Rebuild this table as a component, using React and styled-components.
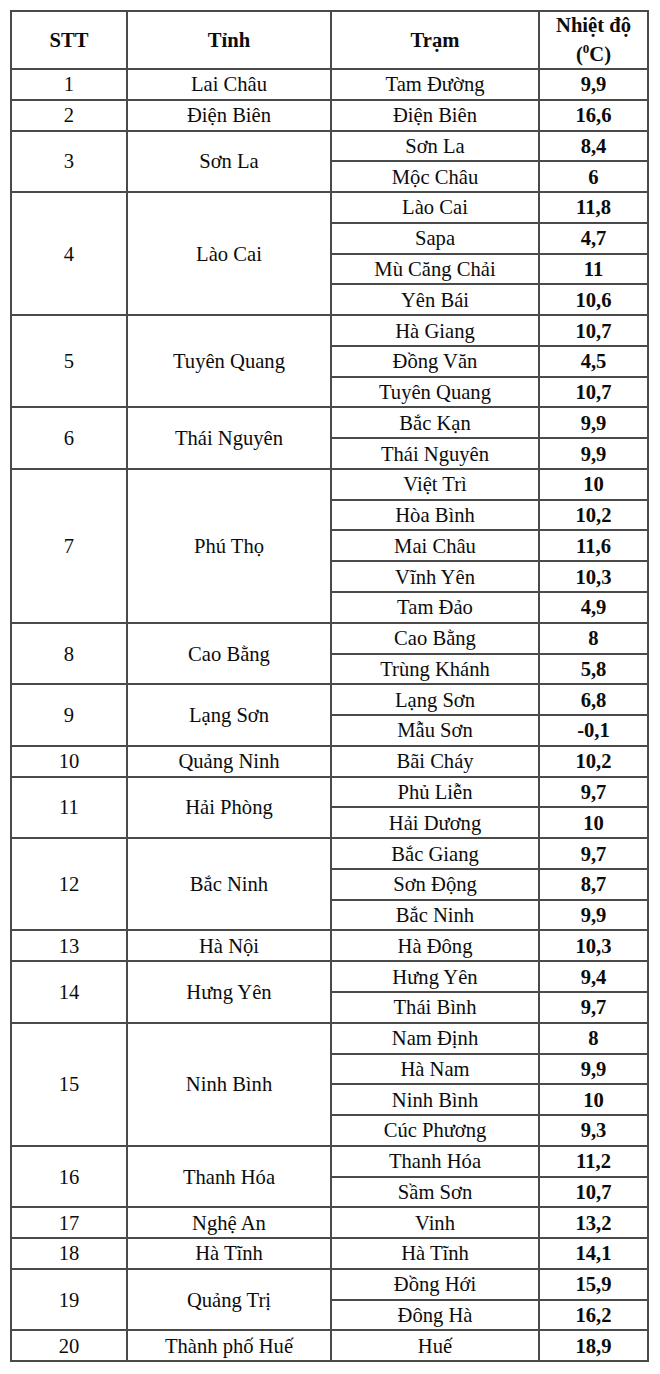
import React from 'react'
import styled, {createGlobalStyle} from 'styled-components'

const GlobalStyle = createGlobalStyle`
  body {
    margin: 0;
    background: #fff;
  }
`

const Page = styled.div`
  width: 660px;
  min-height: 1374px;
  padding: 10px 0 0 10px;
  box-sizing: border-box;
  background: #fff;
`

const Table = styled.table`
  width: 637px;
  border-collapse: collapse;
  table-layout: fixed;
  font-family: "Liberation Serif", "Times New Roman", serif;
  font-size: 20.6px;
  color: #0c0c0c;
`

const HeadCell = styled.th`
  height: 56px;
  border: 2px solid #4a4a4a;
  font-weight: bold;
  text-align: center;
  vertical-align: middle;
  line-height: 23px;
  padding: 0;
`

const Row = styled.tr`
  height: 30.78px;
`

const Cell = styled.td`
  border: 2px solid #4a4a4a;
  text-align: center;
  vertical-align: middle;
  padding: 0;
  line-height: 26px;
  font-weight: ${props => props.bold ? 'bold' : 'normal'};
`

const Sup = styled.sup`
  font-size: 13px;
`

const data = [
  ['Lai Châu', [['Tam Đường', '9,9']]],
  ['Điện Biên', [['Điện Biên', '16,6']]],
  ['Sơn La', [['Sơn La', '8,4'], ['Mộc Châu', '6']]],
  ['Lào Cai', [['Lào Cai', '11,8'], ['Sapa', '4,7'], ['Mù Căng Chải', '11'], ['Yên Bái', '10,6']]],
  ['Tuyên Quang', [['Hà Giang', '10,7'], ['Đồng Văn', '4,5'], ['Tuyên Quang', '10,7']]],
  ['Thái Nguyên', [['Bắc Kạn', '9,9'], ['Thái Nguyên', '9,9']]],
  ['Phú Thọ', [['Việt Trì', '10'], ['Hòa Bình', '10,2'], ['Mai Châu', '11,6'], ['Vĩnh Yên', '10,3'], ['Tam Đảo', '4,9']]],
  ['Cao Bằng', [['Cao Bằng', '8'], ['Trùng Khánh', '5,8']]],
  ['Lạng Sơn', [['Lạng Sơn', '6,8'], ['Mẫu Sơn', '-0,1']]],
  ['Quảng Ninh', [['Bãi Cháy', '10,2']]],
  ['Hải Phòng', [['Phủ Liễn', '9,7'], ['Hải Dương', '10']]],
  ['Bắc Ninh', [['Bắc Giang', '9,7'], ['Sơn Động', '8,7'], ['Bắc Ninh', '9,9']]],
  ['Hà Nội', [['Hà Đông', '10,3']]],
  ['Hưng Yên', [['Hưng Yên', '9,4'], ['Thái Bình', '9,7']]],
  ['Ninh Bình', [['Nam Định', '8'], ['Hà Nam', '9,9'], ['Ninh Bình', '10'], ['Cúc Phương', '9,3']]],
  ['Thanh Hóa', [['Thanh Hóa', '11,2'], ['Sầm Sơn', '10,7']]],
  ['Nghệ An', [['Vinh', '13,2']]],
  ['Hà Tĩnh', [['Hà Tĩnh', '14,1']]],
  ['Quảng Trị', [['Đồng Hới', '15,9'], ['Đông Hà', '16,2']]],
  ['Thành phố Huế', [['Huế', '18,9']]],
]

export default function App() {
  return (
    <Page>
      <GlobalStyle/>
      <Table>
        <colgroup>
          <col style={{width: 116}}/>
          <col style={{width: 204}}/>
          <col style={{width: 208}}/>
          <col style={{width: 109}}/>
        </colgroup>
        <thead>
          <tr>
            <HeadCell>STT</HeadCell>
            <HeadCell>Tỉnh</HeadCell>
            <HeadCell>Trạm</HeadCell>
            <HeadCell>Nhiệt độ<br/>(<Sup>0</Sup>C)</HeadCell>
          </tr>
        </thead>
        <tbody>
          {data.map(([province, stations], idx) => stations.map(([station, temp], i) => (
            <Row key={`${idx}-${i}`}>
              {i === 0 && <Cell rowSpan={stations.length}>{idx + 1}</Cell>}
              {i === 0 && <Cell rowSpan={stations.length}>{province}</Cell>}
              <Cell>{station}</Cell>
              <Cell bold>{temp}</Cell>
            </Row>
          )))}
        </tbody>
      </Table>
    </Page>
  )
}
